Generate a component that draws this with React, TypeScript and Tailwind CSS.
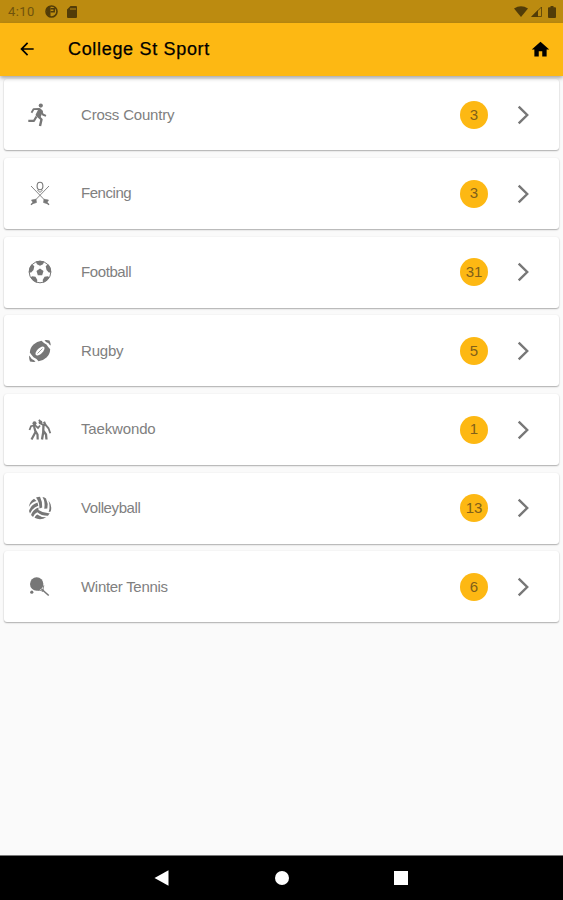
import type { ReactNode } from 'react'
import { MdArrowBack, MdHome } from 'react-icons/md'

type Sport = {
  name: string
  count: number
  icon: ReactNode
  labelClass: string
}

function RunnerIcon() {
  return (
    <svg width="27" height="26" viewBox="0 0 27 26" fill="none" stroke="currentColor" strokeLinejoin="round">
      <circle cx="14.800" cy="3.600" r="2.100" fill="currentColor" stroke="none" />
      <path d="M13 7 7.500 7.200 5.500 10.800" strokeWidth="1.800" />
      <path d="m13.500 7-3 6 3 2.500 2.500-6z" fill="currentColor" strokeWidth="1.800" />
      <path d="m15 8 1.800 4.500 3.200 1.300" strokeWidth="1.900" />
      <path d="m11.500 13.500 4 4-1.500 6.500" strokeWidth="2.400" />
      <path d="M10.500 14.500 8 18.800H2.300" strokeWidth="2.200" />
    </svg>
  )
}

function FencingIcon() {
  return (
    <svg width="22" height="26" viewBox="0 0 22 26" fill="none" stroke="currentColor">
      <path d="M2 5 17.500 21M20 5 4.500 21" strokeWidth="0.900" />
      <ellipse cx="11" cy="5" rx="2.900" ry="3.800" strokeWidth="1.100" />
      <path d="M8.500 9 11 11.500l2.500-2.500" strokeWidth="1" />
      <path d="m2.500 19 4.500-.8.500 3.300-3 1zM19.500 19l-4.500-.8-.5 3.300 3 1z" fill="currentColor" strokeWidth="0.600" />
      <path d="m4.500 21.500-2.500 2.200M17.500 21.500l2.500 2.200" strokeWidth="1.500" />
    </svg>
  )
}

function FootballIcon() {
  return (
    <svg width="24" height="24" viewBox="0 0 24 24" fill="currentColor">
      <circle cx="12" cy="12" r="10.800" fill="none" stroke="currentColor" strokeWidth="1" />
      <path d="m12 8.500 3.500 2.600-1.300 4.100H9.800l-1.300-4.100z" />
      <path d="M7.800 1.500Q12-.2 16.200 1.500L15 4.300l-3 1.500-3-1.500z" />
      <path d="M.8 12.500Q.6 7.500 4 4l2.300 2.200L5.500 10l-2.300 2.500z" />
      <path d="M23.200 12.500Q23.400 7.500 20 4l-2.300 2.200.8 3.800 2.300 2.500z" />
      <path d="M2.500 17.200Q4.500 21.300 8.800 22.800L9.300 20l-1.800-3.200-3.300-.6z" />
      <path d="M21.500 17.200Q19.500 21.300 15.200 22.800L14.700 20l1.800-3.200 3.300-.6z" />
    </svg>
  )
}

function RugbyIcon() {
  return (
    <svg width="24" height="24" viewBox="0 0 24 24" fill="currentColor">
      <path d="M13.500 1.800Q16 4.500 18.500 5.500 20.300 8.500 22.200 10.200 22 15 18.500 18.500 15 21.800 10.500 22.300 9 19.500 5.500 18.200 3.500 16 1.800 13.500 2 9 5.500 5.500 9 2.200 13.500 1.800z" />
      <path d="M16.500 1.200q3-.3 5 .3 1 2 1.300 5Q21.500 6 20.500 4.200 17.500 3 16.500 1.200zM1 16.500Q2 17 3.700 20 6.500 21 7.500 22.800q-3 .3-5.500-.3Q1 20 1 16.500z" />
      <ellipse cx="12" cy="12" rx="5.800" ry="2.700" fill="white" transform="rotate(-45 12 12)" />
      <path d="m9.500 14.500 5-5" stroke="currentColor" strokeWidth="0.700" fill="none" />
    </svg>
  )
}

function TaekwondoIcon() {
  return (
    <svg width="24" height="24" viewBox="0 0 24 24" fill="none" stroke="currentColor">
      <circle cx="6.500" cy="5.300" r="2" fill="currentColor" stroke="none" />
      <path d="m1.500 12 1.500-3.800 4-1 3 2.800 2-2.500" strokeWidth="1.800" />
      <path d="m6 8 1.500 6-4 7.500M7.500 13l2 3.500.2 5" strokeWidth="2.200" />
      <circle cx="12.500" cy="4.500" r="1.900" fill="currentColor" stroke="none" />
      <path d="m11 1.800 2.800 4.500 4.200 1 2.500 3 1.800 5" strokeWidth="1.800" />
      <path d="m15.500 6.500-.3 8-1.200 7M15.500 13l2.500 3.500.5 5" strokeWidth="2.300" />
      <path d="m16 3.800 1.500 3.500" strokeWidth="2.200" />
    </svg>
  )
}

function VolleyballIcon() {
  return (
    <svg width="24" height="24" viewBox="0 0 24 24" fill="currentColor">
      <path d="M8 1.500q2-.8 4-.8Q14.500 5.500 14.200 11.500l-2.700 1Q11.500 6 8 1.500z" />
      <path d="M14.500 1q2 .4 3.500 1.500 2.500 5 1.300 10l-3 .2Q17.500 6 14.500 1z" />
      <path d="M20.500 4.500q4 5 2.200 11l-2 .5q1.700-5.500-.2-11.500z" />
      <path d="M.8 11Q1.500 5.500 6 2.700L8.500 5Q3.500 6 .8 11z" />
      <path d="M1 15Q3 8.500 9.500 6.500l.8 3.200Q4.500 11.500 2 17.500z" />
      <path d="M3 19Q5 13.500 10.500 11.500v2.600q5 3.500 11.200 3.200l-1.700 2.500Q13.500 20 9.300 16.300 6.500 17.500 5 21z" />
      <path d="M6.500 21.800Q7.500 19.500 9.200 18.500q4 3 9 2.800Q12.500 24.800 6.500 21.800z" />
    </svg>
  )
}

function RacketIcon() {
  return (
    <svg width="22" height="22" viewBox="0 0 22 22" fill="none" stroke="currentColor">
      <circle cx="7.700" cy="8" r="6.700" fill="currentColor" stroke="none" />
      <path d="M8.500 14.300c3 0 4 .2 5.500 1.200.2-2 .2-3.500.8-6.200" strokeWidth="0.900" />
      <path d="m12.500 13 7.200 6.500" strokeWidth="1.600" />
      <circle cx="2.800" cy="16.200" r="1.600" fill="currentColor" stroke="none" />
    </svg>
  )
}

const SPORTS: Sport[] = [
  { name: 'Cross Country', count: 3, icon: <RunnerIcon />, labelClass: 'tracking-[-0.200px]' },
  { name: 'Fencing', count: 3, icon: <FencingIcon />, labelClass: 'tracking-[-0.450px]' },
  { name: 'Football', count: 31, icon: <FootballIcon />, labelClass: 'tracking-[-0.400px]' },
  { name: 'Rugby', count: 5, icon: <RugbyIcon />, labelClass: 'tracking-[-0.200px]' },
  { name: 'Taekwondo', count: 1, icon: <TaekwondoIcon />, labelClass: 'tracking-[-0.150px]' },
  { name: 'Volleyball', count: 13, icon: <VolleyballIcon />, labelClass: 'tracking-[-0.400px]' },
  { name: 'Winter Tennis', count: 6, icon: <RacketIcon />, labelClass: 'tracking-[-0.300px]' },
]

function StatusBar() {
  return (
    <div className="flex h-[23px] shrink-0 items-center justify-between bg-[#bc8b10] pl-2 pr-[7px] text-[#523c08]">
      <div className="flex items-center">
        <span className="w-[37px] font-[Roboto,sans-serif] text-[13px] tracking-[0.4px] text-[#70530c]">4:10</span>
        <svg width="13" height="13" viewBox="0 0 13 13" fill="none" stroke="currentColor">
          <circle cx="6.500" cy="6.500" r="5.500" strokeWidth="1.600" />
          <path d="M1.500 3 4 1h1.500v10.500L2 9.500z" fill="currentColor" stroke="none" />
          <path d="M5.500 3.800h3.700v3H5.500" strokeWidth="1.500" />
        </svg>
        <svg className="ml-[9px]" width="10" height="12" viewBox="0 0 10 12" fill="currentColor">
          <path fillRule="evenodd" d="M3.500 0H9q1 0 1 1v10q0 1-1 1H1q-1 0-1-1V3.500zM3.500 2v2h1V2zm2 0v2h1V2zm2 0v2h1V2z" />
        </svg>
      </div>
      <div className="flex items-center">
        <svg width="14" height="11" viewBox="0 0 14 11" fill="currentColor">
          <path d="M0 2.500Q7-2 14 2.500L7 11z" />
        </svg>
        <svg className="ml-[3px]" width="11" height="11" viewBox="0 0 11 11" fill="none" stroke="currentColor">
          <path d="M0 11 7 4v7z" fill="currentColor" stroke="none" />
          <path d="M1 10.500 10.500 1v9.500z" strokeWidth="0.800" />
        </svg>
        <svg className="ml-[6px]" width="8" height="12" viewBox="0 0 8 12" fill="currentColor">
          <path d="M2.500 0h3v1.200H7q1 0 1 1V11q0 1-1 1H1q-1 0-1-1V2.200q0-1 1-1h1.500z" />
        </svg>
      </div>
    </div>
  )
}

function SportRow({ sport }: { sport: Sport }) {
  return (
    <li className="flex h-[71px] items-center rounded-[3px] bg-white shadow-[0_1px_1.500px_rgba(0,0,0,0.3),0_0_2px_rgba(0,0,0,0.06)]">
      <span className="ml-[22px] flex w-[27px] justify-center text-[#777]">{sport.icon}</span>
      <span className={`ml-7 grow text-[15px] text-[#808080] ${sport.labelClass}`}>{sport.name}</span>
      <span className="flex size-7 items-center justify-center rounded-full bg-[#fdb813] text-[15px] text-[#80601a]">
        {sport.count}
      </span>
      <svg className="ml-[29px] mr-[29px]" width="13" height="20" viewBox="0 0 13 20" fill="none" stroke="#777" strokeWidth="2.400">
        <path d="m1.700 1.700 8.500 8.300-8.500 8.300" />
      </svg>
    </li>
  )
}

export default function App() {
  return (
    <div className="flex h-[900px] w-[563px] flex-col overflow-hidden bg-[#fafafa] font-['Liberation_Sans',sans-serif]">
      <StatusBar />
      <header className="z-10 flex h-[53px] shrink-0 items-center bg-[#fdb813] pb-px pl-[17px] pr-3 text-black shadow-[0_2px_4px_rgba(0,0,0,0.35)]">
        <MdArrowBack size={20} />
        <h1 className="ml-[31px] grow text-[18px] tracking-[0.68px] [-webkit-text-stroke:0.250px_#000]">College St Sport</h1>
        <MdHome size={21} />
      </header>

      <main className="grow px-1 pt-[3.450px]">
        <ul className="flex flex-col gap-[7.670px]">
          {SPORTS.map((sport) => (
            <SportRow key={sport.name} sport={sport} />
          ))}
        </ul>
      </main>

      <nav className="flex h-[45px] shrink-0 items-center justify-between border-t border-[#777] bg-black pl-[154px] pr-[155px] text-white">
        <svg width="15" height="16" viewBox="0 0 15 16" fill="currentColor">
          <path d="M0.500 8 14.500 0.200v15.600z" />
        </svg>
        <span className="size-[14px] rounded-full bg-white" />
        <span className="size-[14px] bg-white" />
      </nav>
    </div>
  )
}
